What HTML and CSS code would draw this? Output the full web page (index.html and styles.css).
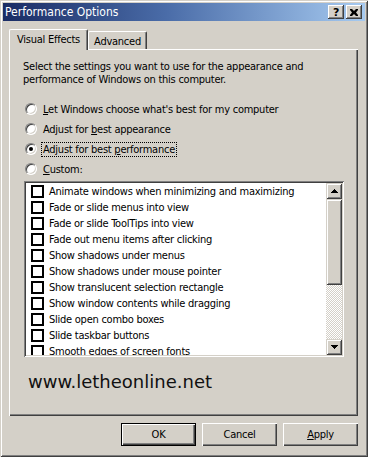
FILE: index.html
```html
<!DOCTYPE html>
<html>
<head>
<meta charset="utf-8">
<link rel="stylesheet" href="styles.css">
</head>
<body>
<div class="window">
  <div class="titlebar">
    <span class="title">Performance Options</span>
    <div class="tbtns">
      <span class="tbtn help">?</span>
      <span class="tbtn close"><svg width="8" height="7" viewBox="0 0 8 7"><path d="M0 0h2l2 2 2-2h2v1L6 3.5 8 6v1H6L4 5 2 7H0V6l2-2.5L0 1z" fill="#000"/></svg></span>
    </div>
  </div>
  <div class="body">
    <div class="tabs">
      <div class="tab active">Visual Effects</div>
      <div class="tab">Advanced</div>
    </div>
    <div class="panel">
      <p class="intro">Select the settings you want to use for the appearance and<br>performance of Windows on this computer.</p>
      <div class="options">
        <div class="opt"><span class="radio"></span><span class="lbl"><u>L</u>et Windows choose what's best for my computer</span></div>
        <div class="opt"><span class="radio"></span><span class="lbl">Adjust for <u>b</u>est appearance</span></div>
        <div class="opt"><span class="radio checked"></span><span class="lbl focus">Adjust for best <u>p</u>erformance</span></div>
        <div class="opt"><span class="radio"></span><span class="lbl"><u>C</u>ustom:</span></div>
      </div>
      <div class="listbox">
        <ul class="items">
          <li><span class="cb"></span>Animate windows when minimizing and maximizing</li>
          <li><span class="cb"></span>Fade or slide menus into view</li>
          <li><span class="cb"></span>Fade or slide ToolTips into view</li>
          <li><span class="cb"></span>Fade out menu items after clicking</li>
          <li><span class="cb"></span>Show shadows under menus</li>
          <li><span class="cb"></span>Show shadows under mouse pointer</li>
          <li><span class="cb"></span>Show translucent selection rectangle</li>
          <li><span class="cb"></span>Show window contents while dragging</li>
          <li><span class="cb"></span>Slide open combo boxes</li>
          <li><span class="cb"></span>Slide taskbar buttons</li>
          <li><span class="cb"></span>Smooth edges of screen fonts</li>
        </ul>
        <div class="scrollbar">
          <div class="sbtn"><svg width="7" height="4" viewBox="0 0 7 4"><path d="M3 0h1v1h1v1h1v1h1v1H0V3h1V2h1V1h1z" fill="#000"/></svg></div>
          <div class="thumb"></div>
          <div class="track"></div>
          <div class="sbtn"><svg width="7" height="4" viewBox="0 0 7 4"><path d="M0 0h7v1H6v1H5v1H4v1H3V3H2V2H1V1H0z" fill="#000"/></svg></div>
        </div>
      </div>
      <div class="watermark">www.letheonline.net</div>
    </div>
    <div class="buttons">
      <div class="btn default">OK</div>
      <div class="btn">Cancel</div>
      <div class="btn"><u>A</u>pply</div>
    </div>
  </div>
</div>
</body>
</html>
```

FILE: styles.css
```css
html, body {
  margin: 0;
  padding: 0;
  background: #d4d0c8;
}
.window {
  width: 368px;
  height: 457px;
  box-sizing: border-box;
  padding: 3px;
  background: #d4d0c8;
  box-shadow: inset 1px 1px 0 #d4d0c8, inset -1px -1px 0 #404040, inset 2px 2px 0 #fff, inset -2px -2px 0 #808080;
  font-family: "DejaVu Sans Condensed", "DejaVu Sans", sans-serif;
  font-size: 11px;
  letter-spacing: -0.25px;
  color: #000;
}
.titlebar {
  height: 18px;
  display: flex;
  align-items: center;
  padding-left: 2px;
  background: linear-gradient(90deg, #1a2c64 0%, #4a6ca8 45%, #a6caf0 100%);
  color: #fff;
}
.title {
  flex: 1;
  font-size: 12px;
  letter-spacing: 0;
}
.tbtns {
  display: flex;
  gap: 2px;
  margin-right: 3px;
}
.tbtn {
  width: 16px;
  height: 14px;
  box-sizing: border-box;
  background: #d4d0c8;
  box-shadow: inset -1px -1px 0 #404040, inset 1px 1px 0 #fff, inset -2px -2px 0 #808080;
  display: flex;
  align-items: center;
  justify-content: center;
  color: #000;
  font-family: "DejaVu Sans", sans-serif;
  font-weight: bold;
  font-size: 11px;
  line-height: 1;
}
.body {
  padding: 0 7px 0 6px;
}
.tabs {
  display: flex;
  align-items: flex-end;
  height: 28px;
  position: relative;
  z-index: 1;
}
.tab {
  box-sizing: border-box;
  height: 18px;
  border-top: 1px solid #fff;
  border-left: 1px solid #fff;
  border-right: 1px solid #404040;
  border-top-left-radius: 2px;
  border-top-right-radius: 2px;
  box-shadow: inset -1px 0 0 #808080;
  background: #d4d0c8;
  display: flex;
  align-items: center;
  justify-content: center;
  width: 59px;
  padding-top: 1px;
}
.tab.active {
  width: 79px;
  height: 21px;
  margin-bottom: -1px;
  padding-top: 0;
  padding-bottom: 2px;
}
.panel {
  box-sizing: border-box;
  width: 349px;
  height: 367px;
  padding: 11px 0 0 14px;
  box-shadow: inset 1px 1px 0 #fff, inset -1px -1px 0 #404040, inset -2px -2px 0 #808080;
}
.intro {
  margin: 0;
  line-height: 13px;
}
.options {
  margin-top: 13px;
}
.opt {
  height: 20px;
  display: flex;
  align-items: center;
}
.radio {
  width: 12px;
  height: 12px;
  box-sizing: border-box;
  margin-left: 2px;
  margin-right: 4px;
  border-radius: 50%;
  border: 1px solid;
  border-color: #808080 #fff #fff #808080;
  background: #fff;
  box-shadow: inset 1px 1px 0 #404040, inset -1px -1px 0 #d4d0c8;
  display: flex;
  align-items: center;
  justify-content: center;
}
.radio.checked::after {
  content: "";
  width: 4px;
  height: 4px;
  border-radius: 50%;
  background: #000;
}
.lbl {
  padding: 0 1px;
  border: 1px dotted transparent;
}
.lbl.focus {
  border-color: #000;
}
.listbox {
  margin: 2px 0 0 1px;
  width: 320px;
  height: 176px;
  box-sizing: border-box;
  padding: 2px;
  background: #fff;
  box-shadow: inset 1px 1px 0 #808080, inset -1px -1px 0 #fff, inset 2px 2px 0 #404040, inset -2px -2px 0 #d4d0c8;
  display: flex;
}
.items {
  flex: 1;
  margin: 0;
  padding: 0;
  list-style: none;
  overflow: hidden;
}
.items li {
  height: 16px;
  display: flex;
  align-items: center;
  white-space: nowrap;
}
.cb {
  width: 13px;
  height: 13px;
  box-sizing: border-box;
  border: 2px solid #000;
  background: #fff;
  margin: 0 5px 0 5px;
}
.scrollbar {
  width: 16px;
  display: flex;
  flex-direction: column;
}
.sbtn, .thumb {
  box-sizing: border-box;
  background: #d4d0c8;
  box-shadow: inset 1px 1px 0 #d4d0c8, inset -1px -1px 0 #404040, inset 2px 2px 0 #fff, inset -2px -2px 0 #808080;
}
.sbtn {
  height: 16px;
  display: flex;
  align-items: center;
  justify-content: center;
}
.thumb {
  height: 86px;
}
.track {
  flex: 1;
  background: repeating-conic-gradient(#fff 0 25%, #d4d0c8 0 50%) 0 0 / 2px 2px;
}
.watermark {
  margin: 14px 0 0 5px;
  font-family: "DejaVu Sans", sans-serif;
  font-size: 18px;
  letter-spacing: 0;
  color: #111;
}
.buttons {
  display: flex;
  justify-content: flex-end;
  gap: 6px;
  margin-top: 7px;
}
.btn {
  width: 75px;
  height: 23px;
  box-sizing: border-box;
  display: flex;
  align-items: center;
  justify-content: center;
  box-shadow: inset 1px 1px 0 #fff, inset -1px -1px 0 #404040, inset -2px -2px 0 #808080;
}
.btn.default {
  box-shadow: inset 1px 1px 0 #000, inset -1px -1px 0 #000, inset 2px 2px 0 #fff, inset -2px -2px 0 #404040, inset -3px -3px 0 #808080;
}
```
